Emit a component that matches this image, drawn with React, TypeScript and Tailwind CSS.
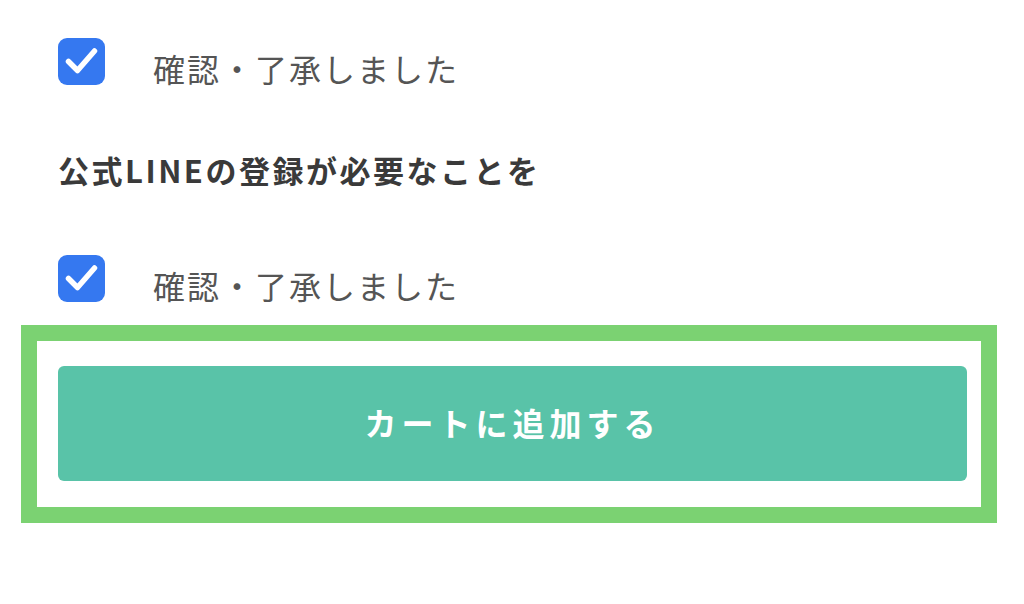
const font = { fontFamily: '"Noto Sans CJK JP", "Noto Sans", sans-serif' }

function CheckBox() {
  return (
    <div className="flex h-[47px] w-[47px] flex-shrink-0 items-center justify-center rounded-[9px] bg-[#3578f0]">
      <svg width="47" height="47" viewBox="0 0 47 47" fill="none">
        <path
          d="M10.5 23.5 L19.5 32.5 L36.5 13"
          stroke="white"
          strokeWidth="5.5"
          strokeLinecap="round"
          strokeLinejoin="round"
        />
      </svg>
    </div>
  )
}

function ConfirmRow() {
  return (
    <div className="flex items-start gap-[48px] pl-[58px]">
      <CheckBox />
      <p className="mt-[14px] text-[32px] leading-none tracking-[2px] text-[#555555]">確認・了承しました</p>
    </div>
  )
}

export default function App() {
  return (
    <div className="h-[604px] w-[1024px] overflow-hidden bg-white" style={font}>
      <div className="pt-[38px]">
        <ConfirmRow />

        {/* Heading */}
        <h2 className="mt-[69px] pl-[58px] text-[31px] font-bold leading-none tracking-[2.5px] text-[#3a3a3a]">
          公式LINEの登録が必要なことを
        </h2>

        <div className="mt-[70px]">
          <ConfirmRow />
        </div>

        {/* Highlighted add-to-cart */}
        <div className="ml-[21px] mt-[23px] h-[198px] w-[976px] border-[16px] border-[#7bd272] pb-[26px] pl-[21px] pr-[14px] pt-[25px]">
          <button className="flex h-[115px] w-full items-center justify-center rounded-[6px] bg-[#59c3a8] pb-[4px] text-[32px] font-bold tracking-[5px] text-white">
            カートに追加する
          </button>
        </div>
      </div>
    </div>
  )
}
